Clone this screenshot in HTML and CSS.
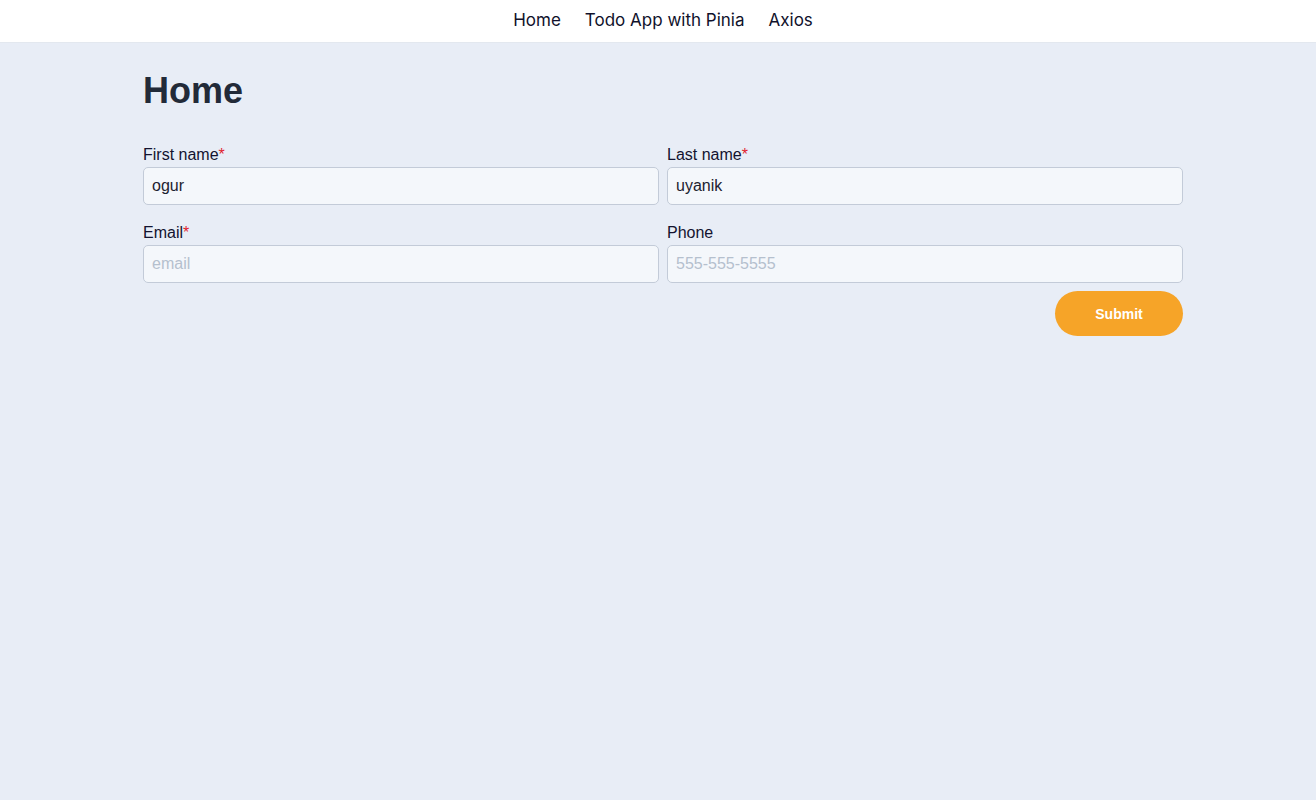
FILE: index.html
```html
<!DOCTYPE html>
<html>
<head>
<meta charset="utf-8">
<link rel="stylesheet" href="styles.css">
</head>
<body>
<nav class="nav">
  <a class="nav-link" href="#">Home</a>
  <a class="nav-link" href="#">Todo App with Pinia</a>
  <a class="nav-link" href="#">Axios</a>
</nav>
<div class="page">
<main class="container">
  <h1 class="title">Home</h1>
  <form class="form">
    <div class="grid">
      <div class="field">
        <label class="label">First name<span class="req">*</span></label>
        <input class="input" type="text" value="ogur">
      </div>
      <div class="field">
        <label class="label">Last name<span class="req">*</span></label>
        <input class="input" type="text" value="uyanik">
      </div>
      <div class="field">
        <label class="label">Email<span class="req">*</span></label>
        <input class="input" type="text" placeholder="email">
      </div>
      <div class="field">
        <label class="label">Phone</label>
        <input class="input" type="text" placeholder="555-555-5555">
      </div>
    </div>
    <div class="actions">
      <button class="submit" type="button">Submit</button>
    </div>
  </form>
</main>
</div>
</body>
</html>
```
FILE: styles.css
```css
* { box-sizing: border-box; }
html, body { margin: 0; padding: 0; }
body {
  background: #e8edf6;
  font-family: "Liberation Sans", Arial, sans-serif;
  color: #13132f;
  min-height: 800px;
}
.nav {
  height: 43px;
  background: #ffffff;
  display: flex;
  justify-content: center;
  align-items: center;
  gap: 24px;
  padding-left: 10px;
  border-bottom: 1px solid #e3e8ef;
}
.nav-link {
  font-family: Inter, "Liberation Sans", sans-serif;
  font-size: 17px;
  color: #10112b;
  text-decoration: none;
  padding-bottom: 3px;
}
.page { padding-left: 10px; }
.container {
  width: 1040px;
  margin: 0 auto;
  padding-top: 25px;
}
.title {
  margin: 0;
  font-size: 36px;
  line-height: 46px;
  font-weight: 700;
  color: #222a38;
}
.form { margin-top: 31px; }
.grid {
  display: grid;
  grid-template-columns: 1fr 1fr;
  column-gap: 8px;
  row-gap: 18px;
}
.field { display: flex; flex-direction: column; }
.label {
  font-size: 16px;
  line-height: 18px;
  padding-top: 1px;
  margin-bottom: 3px;
  color: #13132f;
}
.req { color: #e11d2e; }
.input {
  height: 38px;
  border: 1px solid #c3cbd8;
  border-radius: 5px;
  background: #f4f7fb;
  padding: 0 8px;
  font-family: "Liberation Sans", Arial, sans-serif;
  font-size: 16px;
  color: #1d2230;
  outline: none;
}
.input::placeholder { color: #b5c0ce; }
.actions {
  display: flex;
  justify-content: flex-end;
  margin-top: 8px;
}
.submit {
  width: 128px;
  height: 45px;
  border: none;
  border-radius: 23px;
  background: #f6a428;
  color: #ffffff;
  font-family: "Liberation Sans", Arial, sans-serif;
  font-weight: 700;
  font-size: 14px;
  cursor: pointer;
}
```
